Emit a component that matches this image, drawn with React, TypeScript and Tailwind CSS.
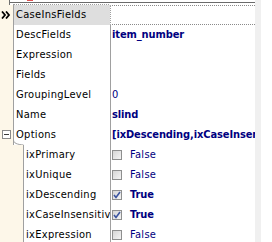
import { type FC } from "react";

type Row = {
  name: string;
  value?: string;
  bold?: boolean;
  child?: boolean;
  check?: boolean;
  expander?: boolean;
  selected?: boolean;
};

const rows: Row[] = [
  { name: "CaseInsFields", selected: true },
  { name: "DescFields", value: "item_number", bold: true },
  { name: "Expression" },
  { name: "Fields" },
  { name: "GroupingLevel", value: "0" },
  { name: "Name", value: "slind", bold: true },
  { name: "Options", value: "[ixDescending,ixCaseInsensitive]", bold: true, expander: true },
  { name: "ixPrimary", value: "False", child: true, check: false },
  { name: "ixUnique", value: "False", child: true, check: false },
  { name: "ixDescending", value: "True", bold: true, child: true, check: true },
  { name: "ixCaseInsensitive", value: "True", bold: true, child: true, check: true },
  { name: "ixExpression", value: "False", child: true, check: false },
];

const CheckBox: FC<{ checked: boolean }> = ({ checked }) => (
  <div className="w-[10px] h-[10px] mr-[8px] border border-[#8e8f8f] bg-gradient-to-br from-[#d6d6d6] to-[#f4f4f4] flex items-center justify-center shrink-0">
    {checked && (
      <svg width="8" height="8" viewBox="0 0 8 8">
        <polyline points="1,4 3,6.5 7,1" fill="none" stroke="#3c55a0" strokeWidth="1.6" />
      </svg>
    )}
  </div>
);

const Expander: FC = () => (
  <svg width="9" height="9" viewBox="0 0 9 9" className="absolute left-[2px] top-[5px]">
    <rect x="0.5" y="0.5" width="8" height="8" fill="#fff" stroke="#8a8a8a" />
    <line x1="2" y1="4.5" x2="7" y2="4.5" stroke="#3a3a3a" />
  </svg>
);

const Chevrons: FC = () => (
  <svg width="10" height="8" viewBox="0 0 10 8" className="absolute left-[1px] top-[6px]">
    <polyline points="1,0.5 4,4 1,7.5" fill="none" stroke="#000" strokeWidth="1.8" />
    <polyline points="5,0.5 8,4 5,7.5" fill="none" stroke="#000" strokeWidth="1.8" />
  </svg>
);

const PropRow: FC<{ row: Row }> = ({ row }) => (
  <div className="flex h-[20px] shrink-0">
    <div
      className={`relative shrink-0 bg-[#fdf7e9] border-r border-[#a0a0a0] ${row.child ? "w-[24px]" : "w-[14px]"}`}
    >
      {row.expander && <Expander />}
      {row.selected && <Chevrons />}
      {row.expander && (
        <svg width="12" height="8" viewBox="0 0 12 8" className="absolute left-[13px] top-[15px]">
          <path d="M0.5,0 C0.5,3 4,4.5 10.5,5 L10.5,8" fill="none" stroke="#a0a0a0" />
        </svg>
      )}
    </div>
    <div
      className={`flex-1 flex items-center pl-[2px] overflow-hidden whitespace-nowrap text-black tracking-[0.3px] ${row.selected ? "bg-[#dedede]" : "bg-white"}`}
    >
      {row.name}
    </div>
    <div
      className={`w-[145px] shrink-0 border-l border-[#a0a0a0] flex items-center pl-[1px] overflow-hidden whitespace-nowrap text-[#000080] ${row.bold ? "font-bold tracking-[-0.1px]" : "tracking-[0.3px]"} ${row.selected ? "border-y border-dotted border-y-[#8a8a8a]" : ""}`}
    >
      {row.check !== undefined && <CheckBox checked={row.check} />}
      {row.value}
    </div>
    <div className="w-[6px] shrink-0 bg-[#f0f0f0]" />
    <div className="w-[11px] shrink-0 bg-white" />
  </div>
);

export default function App() {
  return (
    <div className="w-[272px] h-[242px] overflow-hidden bg-white flex flex-col font-['DejaVu_Sans_Condensed','DejaVu_Sans',sans-serif] text-[11px]">
      <div className="h-[5px] shrink-0 flex">
        <div className="w-[10px] bg-[#fdf7e9] border-r border-[#707070]" />
        <div className="w-[245px] relative">
          <div className="absolute left-[17px] top-0 w-[6px] h-[1px] bg-[#e05050]" />
          <div className="absolute left-0 right-0 top-[2px] h-[1px] bg-[#6a6a6a]" />
          <div className="absolute left-[3px] w-[96px] top-[4px] h-[1px] border-t border-dotted border-[#a0a0a0]" />
        </div>
        <div className="w-[6px] bg-[#f0f0f0]" />
      </div>
      {rows.map((r) => (
        <PropRow key={r.name} row={r} />
      ))}
    </div>
  );
}
